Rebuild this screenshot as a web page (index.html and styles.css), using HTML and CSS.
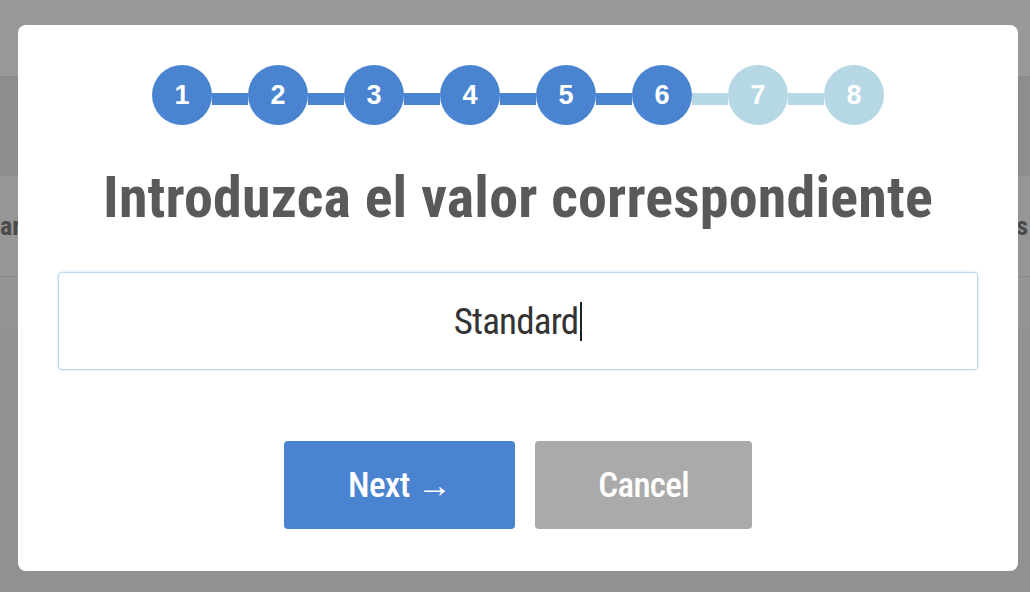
FILE: index.html
```html
<!DOCTYPE html>
<html lang="es">
<head>
<meta charset="UTF-8" />
<meta name="viewport" content="width=device-width, initial-scale=1" />
<title>Introduzca el valor</title>
<link rel="stylesheet" href="styles.css">
</head>
<body>

<!-- Página de fondo -->
<div class="page">
  <div class="topbar"></div>
  <div class="thead"></div>
  <div class="row"><span>ar</span><span>s</span></div>
  <div class="row row-alt"></div>
</div>

<!-- Modal de pasos -->
<div class="overlay">
  <div class="modal">
    <ol class="steps">
      <li class="step done">1</li><li class="line done"></li>
      <li class="step done">2</li><li class="line done"></li>
      <li class="step done">3</li><li class="line done"></li>
      <li class="step done">4</li><li class="line done"></li>
      <li class="step done">5</li><li class="line done"></li>
      <li class="step done">6</li><li class="line"></li>
      <li class="step">7</li><li class="line"></li>
      <li class="step">8</li>
    </ol>

    <h2 class="title">Introduzca el valor correspondiente</h2>

    <div class="field"><span>Standard</span><span class="caret"></span></div>

    <div class="actions">
      <button class="btn btn-next">Next →</button>
      <button class="btn btn-cancel">Cancel</button>
    </div>
  </div>
</div>

</body>
</html>
```

FILE: styles.css
```css
body { margin: 0; height: 592px; overflow: hidden; background: #f2f2f2; font-family: Roboto, "Liberation Sans", sans-serif; }

/* Página detrás del modal */
.page { width: 100%; }
.topbar { height: 76px; background: #fff; border-bottom: 1px solid #e6e6e6; }
.thead { height: 99px; background: #ebebeb; }
.row { height: 100px; background: #fafafa; border-bottom: 1px solid #e3e3e3; display: flex; justify-content: space-between; align-items: center; padding: 0 2px 0 0; font-family: "Roboto Condensed", Roboto, sans-serif; font-stretch: condensed; font-weight: 700; font-size: 26px; color: #7d7d7d; }
.row-alt { height: 50px; background: #f8f8f8; border-bottom: none; }

/* Modal */
.overlay { position: fixed; top: 0; left: 0; width: 100%; height: 100%; background: rgba(0,0,0,0.4); display: flex; justify-content: flex-start; align-items: flex-start; }
.modal { width: 1000px; margin: 25px 0 0 18px; box-sizing: border-box; padding: 40px 40px 42px; background: #fff; border-radius: 8px; text-align: center; }

.steps { list-style: none; margin: 0; padding: 0; display: flex; justify-content: center; align-items: flex-start; }
.step { width: 60px; height: 60px; border-radius: 50%; background: #b5d8e4; color: #fff; font-family: "Liberation Sans", Arial, sans-serif; font-weight: 700; font-size: 27px; line-height: 60px; text-align: center; }
.line { width: 36px; height: 12px; margin-top: 28px; background: #b5d8e4; }
.step.done, .line.done { background: #4a84d0; }

.title { margin: 41px 0 0; font-family: "Roboto Condensed", Roboto, sans-serif; font-stretch: condensed; font-weight: 700; font-size: 58px; letter-spacing: 0.2px; line-height: 62px; color: #595959; }

.field { margin-top: 44px; height: 98px; box-sizing: border-box; border: 1px solid #b4d9ee; border-radius: 4px; box-shadow: 0 0 3px rgba(160,205,235,0.6); display: flex; justify-content: center; align-items: center; font-family: "Roboto Condensed", Roboto, sans-serif; font-stretch: condensed; font-size: 37px; letter-spacing: -0.8px; color: #333; }
.caret { display: inline-block; width: 2px; height: 39px; background: #222; vertical-align: -10px; margin-left: 2px; }

.actions { margin-top: 71px; display: flex; justify-content: center; gap: 20px; }
.btn { height: 88px; padding: 0 64px; border: none; border-radius: 4px; color: #fff; font-family: "Roboto Condensed", Roboto, sans-serif; font-stretch: condensed; font-weight: 500; font-size: 35px; letter-spacing: -0.7px; cursor: pointer; }
.btn-next { background: #4a84d0; }
.btn-cancel { background: #aaaaaa; padding: 0 63px; }
```
